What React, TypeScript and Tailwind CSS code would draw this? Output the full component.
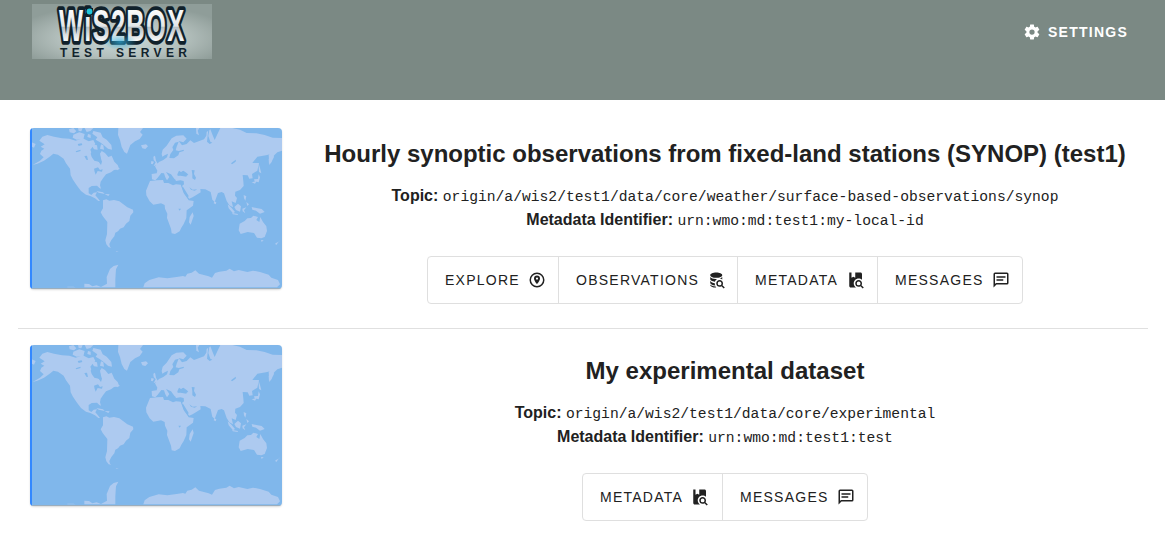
import { ReactNode } from "react";

const COG =
  "M12,15.5A3.5,3.5 0 0,1 8.5,12A3.5,3.5 0 0,1 12,8.5A3.5,3.5 0 0,1 15.5,12A3.5,3.5 0 0,1 12,15.5M19.43,12.97C19.47,12.65 19.5,12.33 19.5,12C19.5,11.67 19.47,11.34 19.43,11L21.54,9.37C21.73,9.22 21.78,8.95 21.66,8.73L19.66,5.27C19.54,5.05 19.27,4.96 19.05,5.05L16.56,6.05C16.04,5.66 15.5,5.32 14.87,5.07L14.5,2.42C14.46,2.18 14.25,2 14,2H10C9.75,2 9.54,2.18 9.5,2.42L9.13,5.07C8.5,5.32 7.96,5.66 7.44,6.05L4.95,5.05C4.73,4.96 4.46,5.05 4.34,5.27L2.34,8.73C2.21,8.95 2.27,9.22 2.46,9.37L4.57,11C4.53,11.34 4.5,11.67 4.5,12C4.5,12.33 4.53,12.65 4.57,12.97L2.46,14.63C2.27,14.78 2.21,15.05 2.34,15.27L4.34,18.73C4.46,18.95 4.73,19.03 4.95,18.95L7.44,17.94C7.96,18.34 8.5,18.68 9.13,18.93L9.5,21.58C9.54,21.82 9.75,22 10,22H14C14.25,22 14.46,21.82 14.5,21.58L14.87,18.93C15.5,18.67 16.04,18.34 16.56,17.94L19.05,18.95C19.27,19.03 19.54,18.95 19.66,18.73L21.66,15.27C21.78,15.05 21.73,14.78 21.54,14.63L19.43,12.97Z";
const MESSAGE =
  "M20 2H4A2 2 0 0 0 2 4V22L6 18H20A2 2 0 0 0 22 16V4A2 2 0 0 0 20 2M4 4H20V16H5.17L4 17.17V4M6 7H18V9H6V7M6 11H15V13H6V11Z";
const MARKER =
  "M12 2A10 10 0 1 0 12 22A10 10 0 1 0 12 2M12 4A8 8 0 1 1 12 20A8 8 0 1 1 12 4M12 6A4 4 0 0 0 8 10C8 13 12 17.5 12 17.5S16 13 16 10A4 4 0 0 0 12 6M12 8.5A1.5 1.5 0 1 1 12 11.5A1.5 1.5 0 1 1 12 8.5Z";
const LENS =
  "M15.5 12C18 12 20 14 20 16.5C20 17.38 19.75 18.21 19.31 18.9L22.39 22L21 23.39L17.88 20.32C17.19 20.75 16.37 21 15.5 21C13 21 11 19 11 16.5C11 14 13 12 15.5 12M15.5 14A2.5 2.5 0 1 0 15.5 19A2.5 2.5 0 1 0 15.5 14Z";
const BOOK =
  "M3 2H6V9L8.5 7.5L11 9V2H18C19.1 2 20 2.9 20 4V11.8C18.8 10.7 17.3 10 15.5 10C11.9 10 9 12.9 9 16.5C9 18.8 10.2 20.8 12 22H5C3.9 22 3 21.1 3 20V2Z";
const DATABASE =
  "M11 2C6.6 2 3 3.6 3 5.500S6.600 9 11 9S19 7.400 19 5.500S15.400 2 11 2M3 8V11C3 12.500 5.400 13.800 9.200 14.200C9.600 12.600 10.700 11.200 12.200 10.500C7.500 10.900 4.500 9.900 3 8M3 13V16C3 17.600 5.700 19 9.700 19.300C9.200 18.300 9 17.300 9 16.200C6.200 15.900 4.100 14.900 3 13M3 18V18.500C3 20.400 6.600 22 11 22C10.700 21.700 10.400 21.300 10.200 20.800C6.600 20.500 4 19.400 3 18M19 8C18 9 16.800 9.700 15.400 10.100C16.800 10.100 18 10.500 19 11.200Z";

function Icon({ paths, size = 18 }: { paths: string[]; size?: number }) {
  return (
    <svg width={size} height={size} viewBox="0 0 24 24" fill="currentColor" className="shrink-0">
      {paths.map((d) => (
        <path key={d} d={d} fillRule="evenodd" />
      ))}
    </svg>
  );
}

function Logo() {
  return (
    <svg width="180" height="55" viewBox="0 0 180 55" className="block overflow-visible">
      <defs>
        <radialGradient id="logoBack" cx="50%" cy="62%" r="62%">
          <stop offset="0" stopColor="#c9dbdb" />
          <stop offset=".55" stopColor="#b4c0bd" />
          <stop offset="1" stopColor="#8f9d99" />
        </radialGradient>
        <radialGradient id="logoGlow">
          <stop offset="0" stopColor="#2fa9d6" stopOpacity=".75" />
          <stop offset="1" stopColor="#2fa9d6" stopOpacity="0" />
        </radialGradient>
        <linearGradient id="logoFace" x1="0" y1="0" x2="0" y2="1">
          <stop offset=".15" stopColor="#ffffff" />
          <stop offset=".52" stopColor="#e3e6e8" />
          <stop offset=".54" stopColor="#b7c0c5" />
          <stop offset=".8" stopColor="#f5f7f8" />
        </linearGradient>
      </defs>
      <rect width="180" height="55" fill="url(#logoBack)" />
      <g fontFamily="Liberation Sans, sans-serif" fontWeight="700">
        <text transform="translate(27 36.5) scale(.58 1)" fontSize="44" textLength="216" stroke="#10212b" strokeWidth="7.5" strokeLinejoin="round" paintOrder="stroke" fill="url(#logoFace)">WiS2BOX</text>
        <ellipse cx="88" cy="38" rx="17" ry="8" fill="url(#logoGlow)" />
        <rect x="54" y="4" width="7" height="7" fill="#10212b" />
        <circle cx="57.500" cy="7.500" r="2.900" fill="#22c6da" />
        <text x="28" y="52.500" fontSize="12" textLength="127" fill="#11232d">TEST SERVER</text>
      </g>
    </svg>
  );
}

const LAND = [
  // North and Central America
  "M28 38L37 26L52 21L72 26L96 31L118 32L137 38L158 31L176 40L190 36L196 48L188 56L181 65L186 78L197 86L206 102L213 93L209 79L215 69L225 75L235 87L245 83L253 101L263 111L268 124L252 126L243 133L228 139L219 151L212 161L210 172L213 182L208 180L201 173L185 174L176 180L176 196L184 201L191 194L201 193L196 202L203 210L210 219L205 219L195 211L181 204L168 200L153 189L140 172L128 154L122 142L120 122L108 106L101 92L84 80L70 77L58 87L42 98L22 107L8 111L30 98L41 88L30 78L34 68L43 62L32 56L44 49Z",
  "M117 4L130 0L139 10L132 16L119 13ZM130 20L148 13L164 18L160 34L140 35L128 29ZM144 0L158 0L154 10L146 9ZM164 0L190 0L181 9L170 12ZM190 9L212 14L218 28L230 35L244 51L246 65L234 62L220 50L210 43L197 35L202 28L187 17ZM174 18L182 20L182 30L172 27ZM182 47L201 52L203 65L192 64ZM213 49L220 52L222 65L210 62ZM254 119L270 120L262 127Z",
  // Greenland and Iceland
  "M265 0L339 0L330 12L338 20L329 33L315 40L301 51L291 77L283 72L275 57L270 36L264 21ZM333 52L348 49L354 55L346 63L337 61ZM5 43L17 48L12 59L6 56Z",
  // South America and the Caribbean
  "M219 217L229 214L238 218L252 216L268 220L280 229L292 238L309 245L310 253L301 263L298 279L288 287L281 298L270 302L264 310L256 314L253 325L244 336L238 348L240 356L244 359L236 358L229 349L226 337L231 318L232 282L218 264L212 253L219 241ZM199 189L219 193L224 198L206 194ZM224 198L239 199L235 204ZM257 369L260 371L266 370Z",
  // Africa
  "M360 159L348 188L349 202L359 220L370 230L393 226L404 231L405 242L412 257L411 270L423 302L425 316L435 318L449 310L454 299L461 288L469 270L470 247L489 233L491 219L476 217L461 195L452 170L438 169L429 172L415 165L402 165L399 156L380 157L369 158ZM488 253L491 264L482 290L477 283L479 267Z",
  // Eurasia
  "M375 115L387 102L400 96L411 88L414 77L404 82L397 86L395 78L398 65L410 53L425 31L439 23L460 22L470 32L460 43L446 39L456 52L470 48L481 37L492 45L510 38L522 34L529 23L530 12L541 4L548 22L554 36L561 21L571 0L607 0L630 5L650 15L679 16L704 21L728 29L756 30L756 68L742 73L728 86L724 103L717 108L716 93L727 77L708 82L682 86L667 105L687 105L682 128L666 138L668 151L658 152L653 142L638 141L640 160L641 174L630 186L616 191L615 203L621 210L617 225L605 220L609 238L598 232L590 219L582 196L575 192L564 195L554 222L547 215L542 192L526 184L511 183L512 193L489 207L478 212L467 199L456 174L462 169L461 159L451 157L438 159L435 153L436 144L452 143L469 146L471 139L460 129L454 133L447 128L442 139L444 149L434 154L423 139L408 132L418 147L411 157L406 148L402 136L394 135L383 149L376 157L366 154L365 138L380 136L382 128Z",
  "M370 86L375 83L378 98L385 110L371 114L377 103L371 96ZM364 99L372 101L368 109L363 107ZM498 0L508 0L503 8L507 22L499 17ZM716 80L729 71L732 87L724 103L718 111ZM685 104L690 120L694 136L687 132ZM686 139L690 148L686 163L674 160L672 154L684 153ZM665 163L680 159L675 167ZM641 201L649 205L646 218L642 211ZM649 222L657 229L652 234ZM553 220L559 223L557 229L551 226Z",
  // Southeast Asia and Oceania
  "M593 229L603 238L615 252L609 256L596 241ZM613 237L624 227L633 235L630 251L618 246ZM607 255L624 258L623 261L608 259ZM637 242L649 238L642 247L646 256L638 250ZM665 237L679 240L695 243L704 252L690 257L678 248L667 245ZM629 287L644 279L652 271L663 270L670 263L684 267L679 276L688 282L691 267L699 282L709 295L711 309L704 327L694 331L681 329L672 315L653 312L632 318L626 307ZM693 336L701 337L695 342ZM752 331L749 337L744 344L738 352L736 346L747 341Z",
  // Antarctica
  "M112 476L130 476L137 478L163 478L163 467L177 468L187 475L200 472L213 477L231 467L230 447L240 423L251 414L265 410L258 424L257 438L256 455L256 478L340 478L344 466L358 456L386 448L412 451L440 447L459 444L466 446L472 437L485 434L496 427L507 437L536 445L546 449L555 435L568 431L589 428L599 422L612 430L626 426L652 432L669 428L690 432L716 440L724 449L744 456L750 469L741 478L112 478Z",
];

const WATER = [
  "M188 65L198 69L210 76L212 89L216 101L213 111L206 101L193 98L185 87L182 77Z",
  "M192 122L204 118L210 126L218 124L216 131L203 129L197 140L194 132Z",
  "M143 48L155 46L157 51L146 54ZM137 70L151 65L152 69L139 73ZM163 84L171 83L174 96L169 95Z",
  "M435 44L446 41L440 56L437 67L446 69L462 65L461 69L448 73L445 82L432 91L418 90L421 78L430 66L427 58Z",
  "M452 133L460 128L471 136L475 141L465 144L452 142ZM485 126L494 127L492 138L498 149L495 156L487 151L487 139Z",
  "M603 106L613 98L618 95L617 101L606 109ZM455 175L460 178L476 204L473 209L463 197ZM478 178L488 185L502 184L494 188L483 185Z",
  "M445 242L453 242L449 248ZM535 4L539 1L535 24L541 41L547 44L539 48L531 41Z",
];

function WorldMap() {
  return (
    <div className="h-[161px] w-[252px] shrink-0 overflow-hidden rounded-[4px] bg-[#80b7eb] shadow-[0_1px_2px_rgba(0,0,0,.15)]">
      <svg width="252" height="161" viewBox="0 0 756 483" className="block">
        <g fill="#adcaf0">{LAND.map((d) => <path key={d} d={d} />)}</g>
        <g fill="#80b7eb">{WATER.map((d) => <path key={d} d={d} />)}</g>
        <path d="M3 0V483" stroke="#3388ff" strokeWidth="6" />
        <path d="M0 481.500H756" stroke="#9caebd" strokeWidth="3" />
      </svg>
    </div>
  );
}

function Action({ label, paths, width, gap = "gap-2" }: { label: string; paths: string[]; width: string; gap?: string }) {
  return (
    <button className={`flex h-full items-center border-l border-[#dfdfdf] pl-[17px] text-[14px] tracking-[1.25px] first:border-l-0 ${gap} ${width}`}>
      <span>{label}</span>
      <Icon paths={paths} />
    </button>
  );
}

function Dataset({ title, topic, id, children }: { title: string; topic: string; id: string; children: ReactNode }) {
  return (
    <section className="flex h-[161px] items-start pl-[30px]">
      <WorldMap />
      <div className="ml-[36px] flex w-[814px] flex-col items-center">
        <h2 className="mt-[10px] text-[24px] leading-8 font-bold whitespace-nowrap">{title}</h2>
        <div className="mt-[14px] text-center text-[16px] whitespace-nowrap">
          <p className="h-6 leading-6">
            <b>Topic:</b> <code className="font-['Liberation_Mono',monospace] text-[14.66px] leading-none">{topic}</code>
          </p>
          <p className="h-6 leading-6">
            <b>Metadata Identifier:</b> <code className="font-['Liberation_Mono',monospace] text-[14.66px] leading-none">{id}</code>
          </p>
        </div>
        <div className="mt-6 flex h-12 shrink-0 rounded-[4px] border border-[#dfdfdf]">{children}</div>
      </div>
    </section>
  );
}

export default function App() {
  return (
    <div className="h-[536px] overflow-hidden bg-white font-['Liberation_Sans',Arial,sans-serif] text-[#212121]">
      <header className="flex h-[100px] items-start justify-between bg-[#7b8984] pt-1 pr-[37px] pl-8">
        <Logo />
        <button className="mt-[19px] flex items-center gap-[7px] text-[14px] leading-[18px] font-bold tracking-[1.25px] text-white">
          <Icon paths={[COG]} />
          <span>SETTINGS</span>
        </button>
      </header>
      <main className="pt-7">
        <Dataset title="Hourly synoptic observations from fixed-land stations (SYNOP) (test1)" topic="origin/a/wis2/test1/data/core/weather/surface-based-observations/synop" id="urn:wmo:md:test1:my-local-id">
          <Action label="EXPLORE" paths={[MARKER]} width="w-[130px]" />
          <Action label="OBSERVATIONS" paths={[DATABASE, LENS]} width="w-[179px]" gap="gap-[9px]" />
          <Action label="METADATA" paths={[BOOK, LENS]} width="w-[140px]" gap="gap-[9px]" />
          <Action label="MESSAGES" paths={[MESSAGE]} width="w-[145px]" />
        </Dataset>
        <hr className="mr-[17px] mt-[39px] mb-4 ml-[18px] border-[#e0e0e0]" />
        <Dataset title="My experimental dataset" topic="origin/a/wis2/test1/data/core/experimental" id="urn:wmo:md:test1:test">
          <Action label="METADATA" paths={[BOOK, LENS]} width="w-[139px]" />
          <Action label="MESSAGES" paths={[MESSAGE]} width="w-[145px]" />
        </Dataset>
      </main>
    </div>
  );
}
